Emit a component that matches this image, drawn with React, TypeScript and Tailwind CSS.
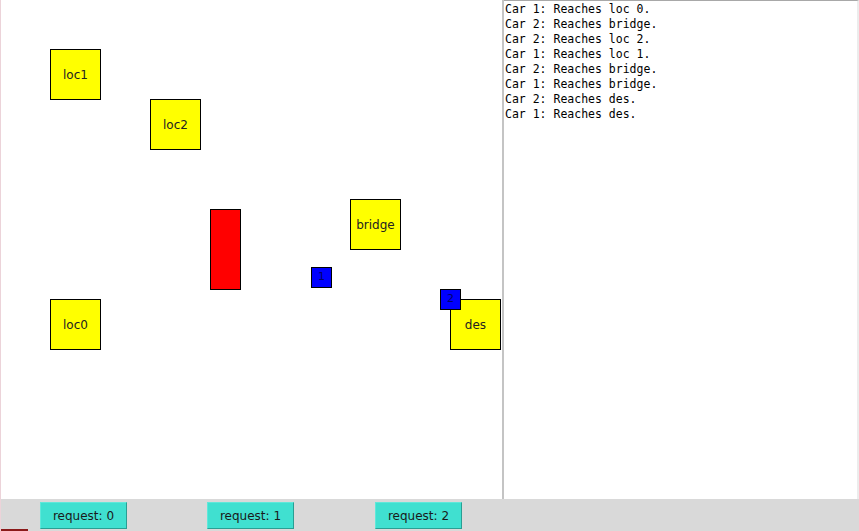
import React from "react";

const places = [
  { name: "loc1", left: 50, top: 49 },
  { name: "loc2", left: 150, top: 99 },
  { name: "loc0", left: 50, top: 299 },
  { name: "bridge", left: 350, top: 199 },
  { name: "des", left: 450, top: 299 },
];

const cars = [
  { id: 1, left: 311, top: 267 },
  { id: 2, left: 440, top: 289 },
];

const log = [
  "Car 1: Reaches loc 0.",
  "Car 2: Reaches bridge.",
  "Car 2: Reaches loc 2.",
  "Car 1: Reaches loc 1.",
  "Car 2: Reaches bridge.",
  "Car 1: Reaches bridge.",
  "Car 2: Reaches des.",
  "Car 1: Reaches des.",
];

const App = () => {
  return (
    <div className="w-[859px] h-[531px] flex flex-col bg-white overflow-hidden font-['DejaVu_Sans',sans-serif]">
      <div className="flex h-[499px]">
        <div className="relative w-[502px] h-full bg-white border-l border-[#ecd3d9]">
          {places.map((p) => (
            <div
              key={p.name}
              className="absolute w-[51px] h-[51px] bg-[#ffff00] border border-black flex items-center justify-center text-[12px] text-[#222]"
              style={{ left: p.left - 1, top: p.top }}
            >
              {p.name}
            </div>
          ))}
          <div className="absolute left-[209px] top-[209px] w-[31px] h-[81px] bg-[#ff0000] border border-black" />
          {cars.map((c) => (
            <div
              key={c.id}
              className="absolute w-[21px] h-[21px] bg-[#0000ff] border border-black flex items-center justify-center text-[11px] text-[#00006a]"
              style={{ left: c.left - 1, top: c.top }}
            >
              {c.id}
            </div>
          ))}
        </div>
        <div className="w-[2px] h-full bg-[#c4c4c4]" />
        <div className="flex-1 h-full border-t border-[#a8a8a8] border-r-2 border-r-[#ececec] pl-[1px] pt-[1px] font-['DejaVu_Sans_Mono',monospace] text-[11.5px] leading-[15px] text-black">
          {log.map((line, i) => (
            <div key={i} className="whitespace-pre">
              {line}
            </div>
          ))}
        </div>
      </div>
      <div className="relative flex-1 bg-[#d9d9d9] border-l border-[#ecd3d9] flex items-start pt-[3px]">
        <div className="ml-[39px] flex gap-[80px]">
          {[0, 1, 2].map((n) => (
            <button
              key={n}
              className={
                "w-[87px] h-[27px] bg-[#40e0d0] border border-t-[#5fe8da] border-l-[#5fe8da] border-r-[#2a9e93] border-b-[#2a9e93] text-[12px] text-[#1a1a1a] flex items-center justify-center" +
                (n === 2 ? " ml-[1px]" : "")
              }
            >
              request: {n}
            </button>
          ))}
        </div>
        <div className="absolute left-0 bottom-0 w-[27px] h-[2px] bg-[#8b1a1a]" />
      </div>
    </div>
  );
};

export default App;
